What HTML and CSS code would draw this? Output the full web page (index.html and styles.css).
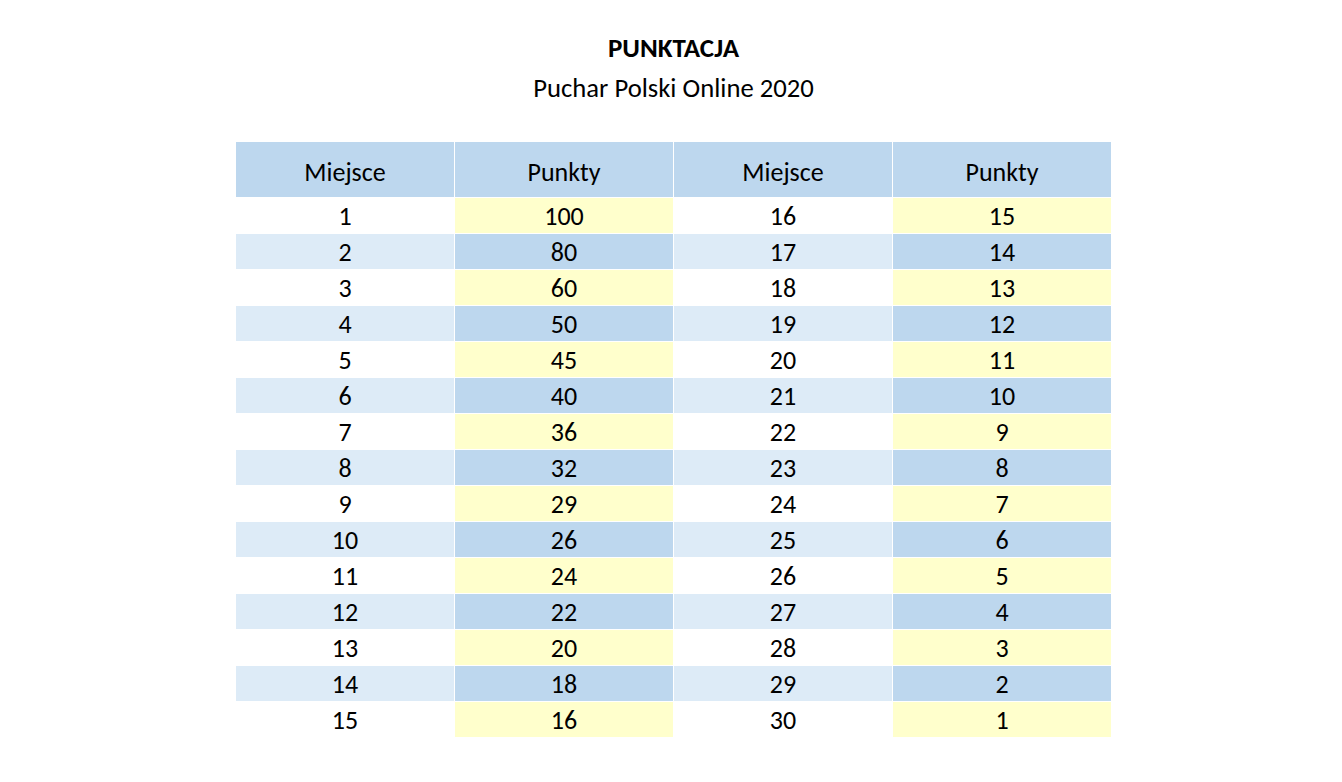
FILE: index.html
```html
<!DOCTYPE html>
<html lang="pl">
<head>
<meta charset="utf-8">
<title>Punktacja</title>
<link rel="stylesheet" href="styles.css">
</head>
<body>
<div class="sheet">
  <h1 class="title">PUNKTACJA</h1>
  <p class="subtitle">Puchar Polski Online 2020</p>
  <table class="scores">
    <thead>
      <tr><th>Miejsce</th><th>Punkty</th><th>Miejsce</th><th>Punkty</th></tr>
    </thead>
    <tbody>
      <tr><td>1</td><td class="pts">100</td><td>16</td><td class="pts">15</td></tr>
      <tr><td>2</td><td class="pts">80</td><td>17</td><td class="pts">14</td></tr>
      <tr><td>3</td><td class="pts">60</td><td>18</td><td class="pts">13</td></tr>
      <tr><td>4</td><td class="pts">50</td><td>19</td><td class="pts">12</td></tr>
      <tr><td>5</td><td class="pts">45</td><td>20</td><td class="pts">11</td></tr>
      <tr><td>6</td><td class="pts">40</td><td>21</td><td class="pts">10</td></tr>
      <tr><td>7</td><td class="pts">36</td><td>22</td><td class="pts">9</td></tr>
      <tr><td>8</td><td class="pts">32</td><td>23</td><td class="pts">8</td></tr>
      <tr><td>9</td><td class="pts">29</td><td>24</td><td class="pts">7</td></tr>
      <tr><td>10</td><td class="pts">26</td><td>25</td><td class="pts">6</td></tr>
      <tr><td>11</td><td class="pts">24</td><td>26</td><td class="pts">5</td></tr>
      <tr><td>12</td><td class="pts">22</td><td>27</td><td class="pts">4</td></tr>
      <tr><td>13</td><td class="pts">20</td><td>28</td><td class="pts">3</td></tr>
      <tr><td>14</td><td class="pts">18</td><td>29</td><td class="pts">2</td></tr>
      <tr><td>15</td><td class="pts">16</td><td>30</td><td class="pts">1</td></tr>
    </tbody>
  </table>
</div>
</body>
</html>
```
FILE: styles.css
```css
html, body {
  margin: 0;
  padding: 0;
  background: #ffffff;
}
body {
  font-family: Carlito, "Open Sans", "Liberation Sans", sans-serif;
  color: #000000;
}
.sheet {
  width: 877px;
  margin-left: 235px;
  padding-top: 28px;
}
.title {
  margin: 0;
  text-align: center;
  font-size: 27px;
  font-weight: 700;
  line-height: 40px;
}
.subtitle {
  margin: 0;
  text-align: center;
  font-size: 26.67px;
  line-height: 40px;
}
.scores {
  margin-top: 33px;
  border-collapse: separate;
  border-spacing: 1px;
  table-layout: fixed;
  width: 877px;
}
.scores th,
.scores td {
  text-align: center;
  font-size: 26px;
  font-weight: 400;
  width: 218px;
}
.scores th {
  height: 55px;
  padding: 0 0 9px;
  line-height: 32px;
  vertical-align: bottom;
  box-sizing: border-box;
  background: #bdd7ee;
}
.scores tbody tr {
  height: 35px;
}
.scores td {
  padding: 1px 0 0;
  line-height: 34px;
  vertical-align: top;
  background: #ffffff;
}
.scores td.pts {
  background: #ffffcc;
}
.scores tbody tr:nth-child(even) td {
  background: #ddebf7;
}
.scores tbody tr:nth-child(even) td.pts {
  background: #bdd7ee;
}
```
